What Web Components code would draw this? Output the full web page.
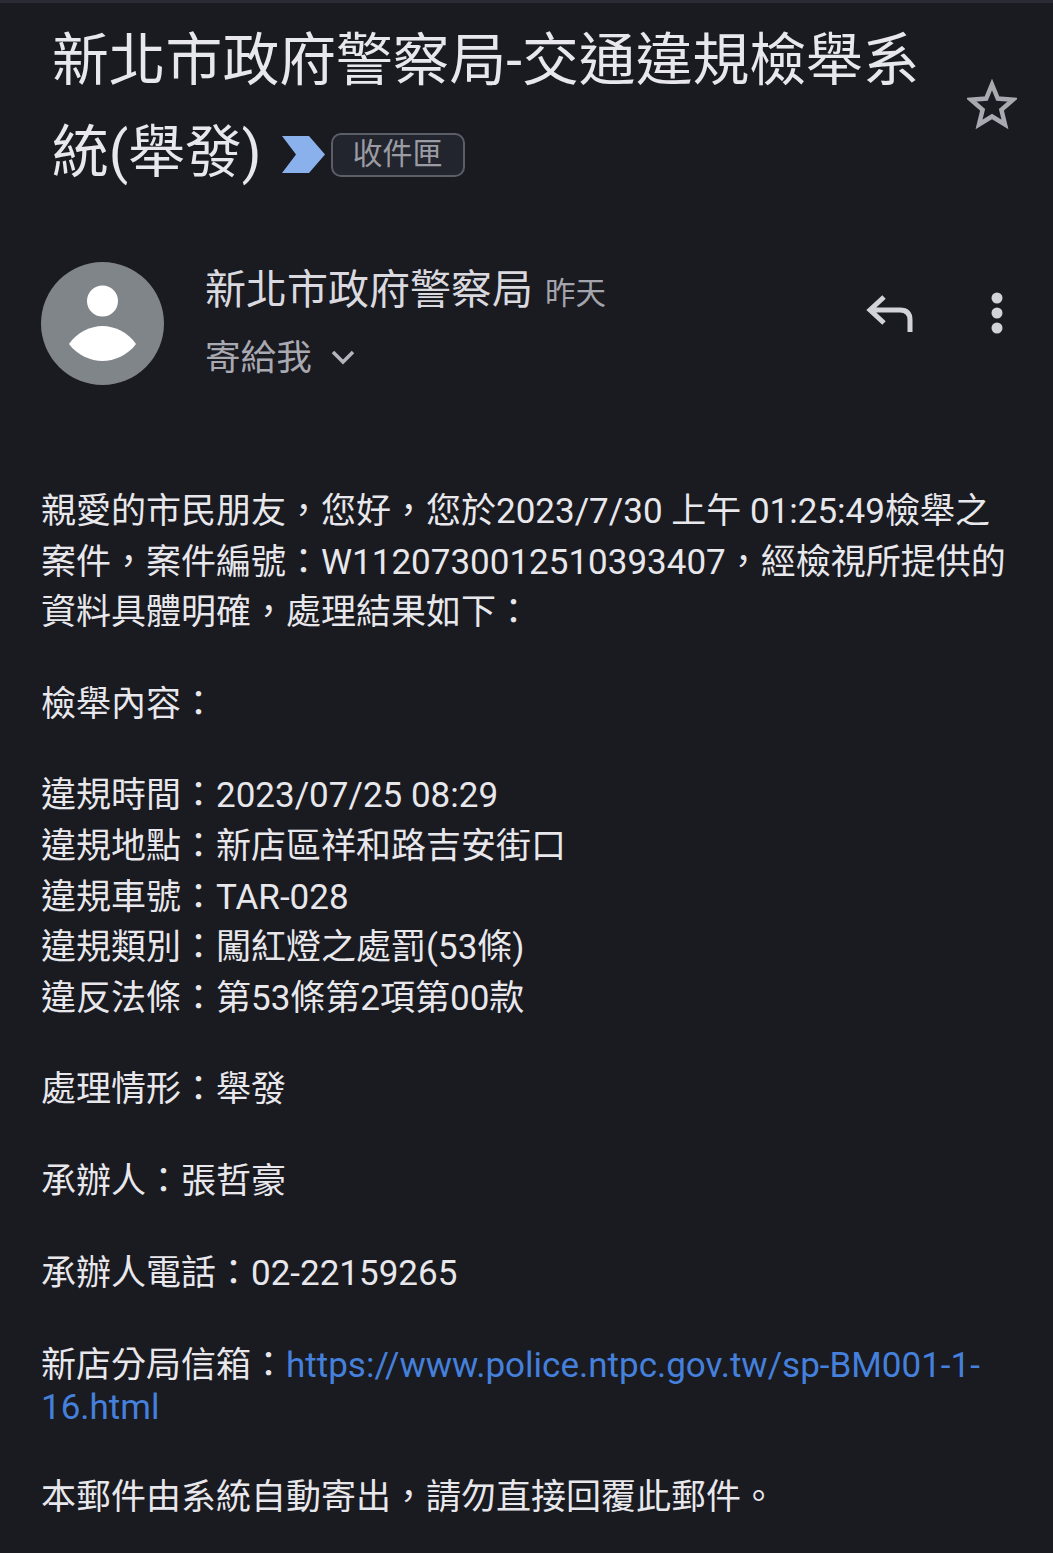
<!DOCTYPE html>
<html lang="zh-Hant">
<head>
<meta charset="utf-8">
<title>郵件</title>
<style>
  html, body { margin: 0; background: #1a1a21; }
  body { font-family: Roboto, "Noto Sans CJK TC", sans-serif; }
  a { color: #4480dc; text-decoration: none; }
</style>
</head>
<body>
<mail-screen>
  <mail-subject label="收件匣">新北市政府警察局-交通違規檢舉系統(舉發)</mail-subject>
  <mail-sender name="新北市政府警察局" when="昨天" to="寄給我"></mail-sender>
  <mail-body>
    <p>親愛的市民朋友，您好，您於2023/7/30 上午 01:25:49檢舉之案件，案件編號：W1120730012510393407，經檢視所提供的資料具體明確，處理結果如下：</p>
    <p>檢舉內容：</p>
    <p>違規時間：2023/07/25 08:29<br>
    違規地點：新店區祥和路吉安街口<br>
    違規車號：TAR-028<br>
    違規類別：闖紅燈之處罰(53條)<br>
    違反法條：第53條第2項第00款</p>
    <p>處理情形：舉發</p>
    <p>承辦人：張哲豪</p>
    <p>承辦人電話：02-22159265</p>
    <p class="auto">新店分局信箱：<a href="#">https://www.police.ntpc.gov.tw/sp-BM001-1-16.html</a></p>
    <p>本郵件由系統自動寄出，請勿直接回覆此郵件。</p>
  </mail-body>
</mail-screen>
<script>
class MailScreen extends HTMLElement {
  constructor() {
    super();
    this.attachShadow({ mode: "open" });
    this.shadowRoot.innerHTML = `
      <style>
        :host { display: block; height: 1553px; overflow: hidden; background: #1a1a21; border-top: 3px solid #2b2b33; box-sizing: border-box; }
      </style>
      <slot></slot>`;
  }
}

class MailSubject extends HTMLElement {
  constructor() {
    super();
    this.attachShadow({ mode: "open" });
    const label = this.getAttribute("label");
    this.shadowRoot.innerHTML = `
      <style>
        :host { display: flex; align-items: flex-start; padding: 12px 36px 0 52px; color: #e7e7ed; }
        h1 { flex: 1; margin: 0; font-size: 56.8px; font-weight: 400; line-height: 92px; }
        .mark { display: inline-block; width: 43px; height: 37px; vertical-align: -1px; margin-left: 20px; }
        .label { display: inline-block; box-sizing: border-box; width: 134px; height: 44px; margin-left: 6px; vertical-align: 8px; border: 2px solid #5b5e67; border-radius: 10px; background: #22252d; color: #9b9ca3; font-size: 30px; line-height: 38px; text-align: center; }
        .star { width: 50px; height: 50px; margin-top: 64px; flex: none; }
      </style>
      <h1><slot></slot><svg class="mark" viewBox="0 0 43 37"><path d="M0 0H27L43 18.500 27 37H0L14 18.500Z" fill="#8ab1ec"/></svg><span class="label">${label}</span></h1>
      <svg class="star" viewBox="0 0 50 50"><path d="M25 5.500 30.800 19.600 46 20.800 34.400 30.700 38 45.500 25 37.500 12 45.500 15.600 30.700 4 20.800 19.200 19.600Z" fill="none" stroke="#a9a9b1" stroke-width="4.500"/></svg>`;
  }
}

class MailSender extends HTMLElement {
  constructor() {
    super();
    this.attachShadow({ mode: "open" });
    const name = this.getAttribute("name");
    const when = this.getAttribute("when");
    const to = this.getAttribute("to");
    this.shadowRoot.innerHTML = `
      <style>
        :host { display: flex; align-items: flex-start; padding: 63px 48px 0 41px; }
        .avatar { width: 123px; height: 123px; flex: none; margin-right: 41px; }
        .who { flex: 1; }
        .line { display: flex; align-items: baseline; }
        .name { font-size: 41px; line-height: 56px; color: #d9d9df; }
        .when { font-size: 30.5px; margin-left: 12px; color: #a4a4ac; }
        .to { font-size: 35.6px; line-height: 52px; color: #a9a9b1; margin-top: 14px; }
        .chev { width: 26px; height: 16px; align-self: flex-start; margin: 17px 0 0 18px; }
        .reply { width: 50px; height: 42px; margin: 30px 75px 0 0; flex: none; }
        .more { width: 16px; height: 44px; margin-top: 29px; flex: none; }
      </style>
      <svg class="avatar" viewBox="0 0 123 123">
        <circle cx="61.500" cy="61.500" r="61.500" fill="#80858a"/>
        <circle cx="61.500" cy="39" r="15.500" fill="#fff"/>
        <path d="M28 82C36 70 50 64 61.500 64 73 64 87 70 95 82 87 93 73 99 61.500 99 50 99 36 93 28 82Z" fill="#fff"/>
      </svg>
      <div class="who">
        <div class="line"><span class="name">${name}</span><span class="when">${when}</span></div>
        <div class="line to"><span>${to}</span><svg class="chev" viewBox="0 0 26 16"><path d="M3 3 13 13 23 3" fill="none" stroke="#b4b4bc" stroke-width="3.500"/></svg></div>
      </div>
      <svg class="reply" viewBox="0 0 50 42"><path d="M20 5 6 18 20 31M6 18H36Q46 18 46 28V40" fill="none" stroke="#d2d2d8" stroke-width="5"/></svg>
      <svg class="more" viewBox="0 0 16 44"><circle cx="8" cy="7" r="5.500" fill="#d2d2d8"/><circle cx="8" cy="22" r="5.500" fill="#d2d2d8"/><circle cx="8" cy="37" r="5.500" fill="#d2d2d8"/></svg>`;
  }
}

class MailBody extends HTMLElement {
  constructor() {
    super();
    this.attachShadow({ mode: "open" });
    this.shadowRoot.innerHTML = `
      <style>
        :host { display: block; padding: 102px 42px 0 41px; color: #e8e8ec; font-size: 35px; }
        ::slotted(p) { margin: 0 0 41px; line-height: 50.6px; }
        ::slotted(p.auto) { margin: -4px 0 45px; line-height: normal; }
      </style>
      <slot></slot>`;
  }
}

customElements.define("mail-screen", MailScreen);
customElements.define("mail-subject", MailSubject);
customElements.define("mail-sender", MailSender);
customElements.define("mail-body", MailBody);
</script>
</body>
</html>
